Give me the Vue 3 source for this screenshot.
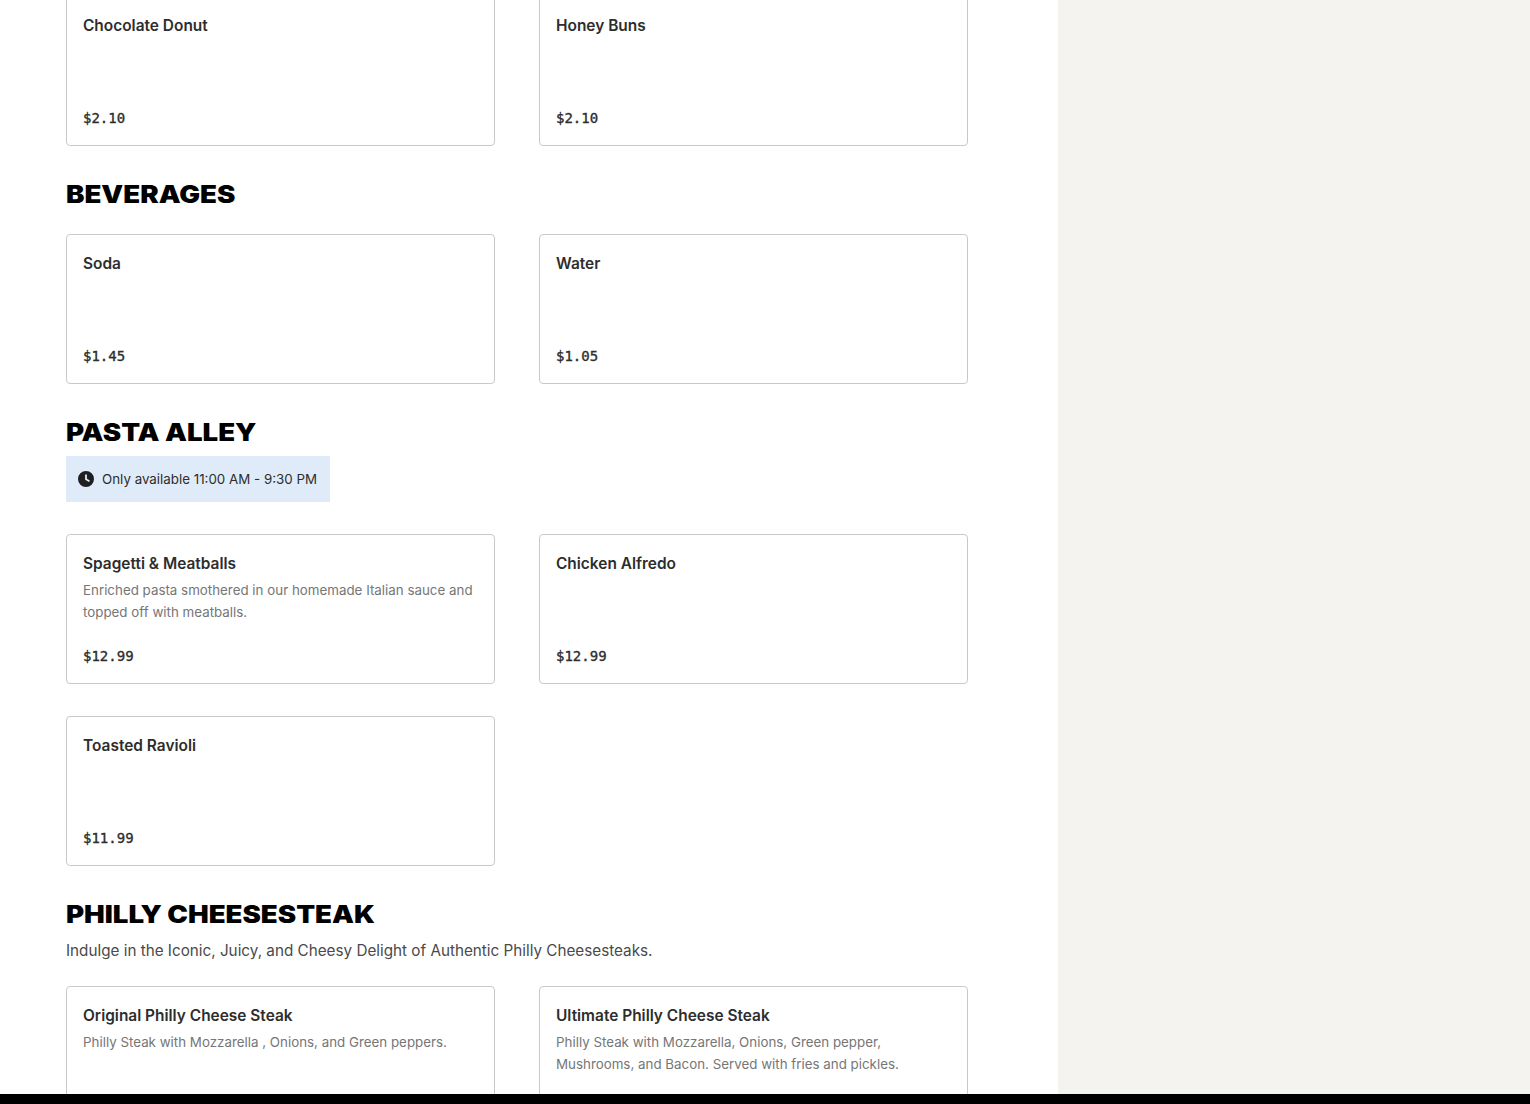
<script setup>
const sections = [
  { id: 'top', items: [
    { name: 'Chocolate Donut', price: '$2.10' },
    { name: 'Honey Buns', price: '$2.10' },
  ] },
  { id: 'bev', title: 'BEVERAGES', items: [
    { name: 'Soda', price: '$1.45' },
    { name: 'Water', price: '$1.05' },
  ] },
  { id: 'pasta', title: 'PASTA ALLEY', notice: 'Only available 11:00 AM - 9:30 PM', items: [
    { name: 'Spagetti & Meatballs', desc: 'Enriched pasta smothered in our homemade Italian sauce and topped off with meatballs.', price: '$12.99' },
    { name: 'Chicken Alfredo', price: '$12.99' },
    { name: 'Toasted Ravioli', price: '$11.99' },
  ] },
  { id: 'philly', title: 'PHILLY CHEESESTEAK', sub: 'Indulge in the Iconic, Juicy, and Cheesy Delight of Authentic Philly Cheesesteaks.', items: [
    { name: 'Original Philly Cheese Steak', desc: 'Philly Steak with Mozzarella , Onions, and Green peppers.' },
    { name: 'Ultimate Philly Cheese Steak', desc: 'Philly Steak with Mozzarella, Onions, Green pepper, Mushrooms, and Bacon. Served with fries and pickles.' },
  ] },
]
</script>

<template>
  <div class="page">
    <div class="layout">
      <main class="menu">
        <section v-for="s in sections" :key="s.id" class="section" :class="'section-' + s.id">
          <h2 v-if="s.title" class="heading">{{ s.title }}</h2>
          <p v-if="s.sub" class="sub">{{ s.sub }}</p>
          <div v-if="s.notice" class="notice">
            <svg class="clock" width="16" height="16" viewBox="0 0 16 16" aria-hidden="true">
              <path fill="#1f1f1f" fill-rule="evenodd" d="M8 0a8 8 0 1 1 0 16A8 8 0 0 1 8 0Zm-.9 3.6v5.1l3.9 2.2.9-1.5-3-1.7V3.6H7.1Z" />
            </svg>
            <span>{{ s.notice }}</span>
          </div>
          <div class="grid">
            <article v-for="item in s.items" :key="item.name" class="card">
              <h3 class="name">{{ item.name }}</h3>
              <p v-if="item.desc" class="desc">{{ item.desc }}</p>
              <span v-if="item.price" class="price">{{ item.price }}</span>
            </article>
          </div>
        </section>
      </main>
      <aside class="side"></aside>
    </div>
    <div class="bar"></div>
  </div>
</template>

<style>
html, body { margin: 0; background: #fff; overflow: hidden; }
</style>

<style scoped>
.page {
  height: 1104px;
  display: flex;
  flex-direction: column;
  overflow: hidden;
  font-family: "Inter", "Liberation Sans", sans-serif;
  color: #2d2d2d;
}
.layout {
  flex: 1;
  min-height: 0;
  display: flex;
  overflow: hidden;
}
.menu {
  width: 1058px;
  box-sizing: border-box;
  padding: 0 90px 0 66px;
  background: #fff;
}
.side {
  flex: 1;
  background: #f4f3ef;
}
.bar {
  height: 10px;
  background: #000;
}
.section { margin-bottom: 32px; }
.section-top { margin-top: -4px; }
.heading {
  margin: 0 0 22px;
  font-size: 24px;
  line-height: 34px;
  font-weight: 900;
  color: #000;
  transform: scaleX(1.15);
  transform-origin: left center;
}
.section-pasta .heading,
.section-philly .heading { margin-bottom: 6px; }
.sub {
  margin: 0 0 22px;
  font-size: 15.25px;
  line-height: 26px;
  color: #4a4a4a;
}
.notice {
  display: inline-flex;
  align-items: center;
  gap: 8px;
  height: 46px;
  padding: 0 13px 0 12px;
  margin-bottom: 32px;
  vertical-align: top;
  box-sizing: border-box;
  background: #e0ebf9;
  font-size: 13.35px;
  color: #2d2d2d;
}
.clock { flex: none; }
.grid {
  display: grid;
  grid-template-columns: 429px 429px;
  column-gap: 44px;
  row-gap: 32px;
}
.card {
  height: 150px;
  box-sizing: border-box;
  padding: 16px;
  border: 1px solid #c9c9c9;
  border-radius: 4px;
  display: flex;
  flex-direction: column;
}
.name {
  margin: 0;
  font-size: 15.45px;
  line-height: 26px;
  font-weight: 600;
  color: #2d2d2d;
}
.desc {
  margin: 2px 0 0;
  font-size: 13.35px;
  line-height: 22px;
  color: #767676;
}
.price {
  margin-top: auto;
  font-family: "DejaVu Sans Mono", monospace;
  font-size: 14px;
  line-height: 22px;
  font-weight: 400;
  -webkit-text-stroke: 0.35px #2d2d2d;
  color: #2d2d2d;
}
</style>
